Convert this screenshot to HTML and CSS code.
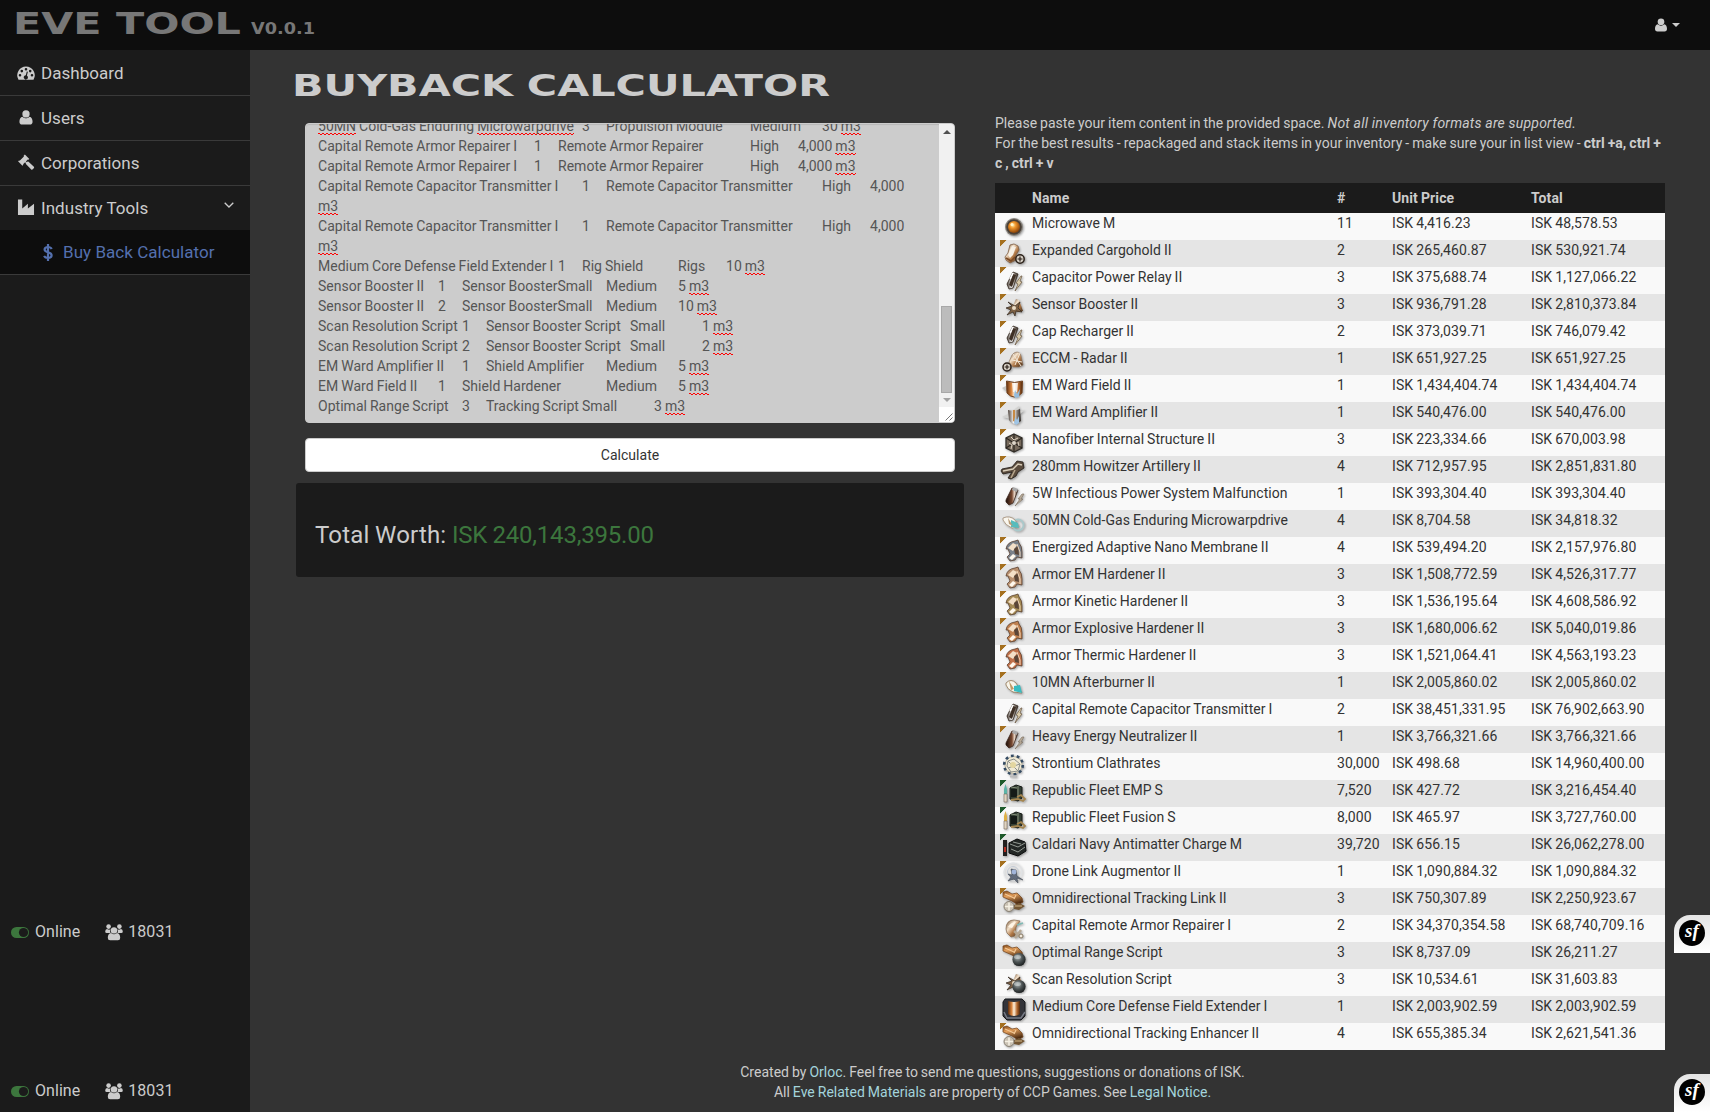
FILE: index.html
```html
<!DOCTYPE html>
<html lang="en">
<head>
<meta charset="utf-8">
<title>Eve Tool - Buyback Calculator</title>
<link rel="stylesheet" href="styles.css">
</head>
<body>
<svg class="defs" width="0" height="0" aria-hidden="true">
  <defs>
    <linearGradient id="bronze" x1="0" y1="0" x2="1" y2="1"><stop offset="0" stop-color="#6d4a2c"/><stop offset=".35" stop-color="#f3e2cc"/><stop offset=".6" stop-color="#b27a48"/><stop offset="1" stop-color="#3b2818"/></linearGradient>
    <linearGradient id="orange" x1="0" y1="0" x2=".4" y2="1"><stop offset="0" stop-color="#7c4517"/><stop offset=".4" stop-color="#e4a05c"/><stop offset="1" stop-color="#4b2a10"/></linearGradient>
    <linearGradient id="steel" x1="0" y1="0" x2="1" y2="0"><stop offset="0" stop-color="#4a3e36"/><stop offset=".45" stop-color="#fff"/><stop offset=".7" stop-color="#8b8178"/><stop offset="1" stop-color="#2c2622"/></linearGradient>
    <linearGradient id="copper" x1="0" y1="0" x2="1" y2="0"><stop offset="0" stop-color="#5d2f10"/><stop offset=".3" stop-color="#d8833d"/><stop offset=".5" stop-color="#fff2de"/><stop offset=".75" stop-color="#b4682d"/><stop offset="1" stop-color="#4d270d"/></linearGradient>
    <linearGradient id="darkred" x1="0" y1="0" x2="1" y2="0"><stop offset="0" stop-color="#1c0f09"/><stop offset=".5" stop-color="#7a4a32"/><stop offset=".7" stop-color="#e8d4c4"/><stop offset="1" stop-color="#24150e"/></linearGradient>
    <radialGradient id="amber" cx=".4" cy=".35" r=".7"><stop offset="0" stop-color="#fff0b0"/><stop offset=".35" stop-color="#f0952a"/><stop offset="1" stop-color="#7c3804"/></radialGradient>
    <radialGradient id="glass" cx=".4" cy=".35" r=".7"><stop offset="0" stop-color="#a9b0b0"/><stop offset=".5" stop-color="#4c5354"/><stop offset="1" stop-color="#171a1a"/></radialGradient>
  </defs>
  <symbol id="orb" viewBox="0 0 27 27"><circle cx="14" cy="14" r="9" fill="#8b8781"/><circle cx="14" cy="14" r="7.8" fill="#4a4037"/><circle cx="14" cy="14" r="6" fill="url(#amber)"/><circle cx="12" cy="11.5" r="1.5" fill="#fff5cc"/></symbol>
  <symbol id="plus" viewBox="0 0 27 27"><circle cx="20" cy="19" r="4.2" fill="#d5cec4" stroke="#2b2018" stroke-width="1.5"/><path d="M20 16.6v4.8M17.6 19h4.8" stroke="#2b2018" stroke-width="1.2"/></symbol>
  <symbol id="cargo" viewBox="0 0 27 27"><path d="M5 17l3-4 2-8 4-1 4 2 1 4-3 5 0 5-6 3-4-3z" fill="url(#bronze)" stroke="#7d5d42" stroke-width=".8"/><path d="M8 15l4-9 4 1-3 8-3 3z" fill="#f6f0e6"/><path d="M6 18l5 3 4-4" fill="none" stroke="#7b4a24" stroke-width="1.5"/><use href="#plus"/></symbol>
  <symbol id="cap" viewBox="0 0 27 27"><path d="M7 17l6-12 5 2-5 14-4 1z" fill="url(#steel)" stroke="#35291f" stroke-width=".8"/><path d="M13 7l3 1-4 12-3-2z" fill="#3f3025"/><path d="M10 12l3-6" stroke="#fff" stroke-width="1.5"/><path d="M21 9l-5 7 2 1-3 7 7-9-2-1 2-5z" fill="#dacbaa" stroke="#64523c" stroke-width=".7"/></symbol>
  <symbol id="sensor" viewBox="0 0 27 27"><path d="M16 5l3 1 4 11-6 1-4-6z" fill="url(#bronze)"/><path d="M8 8l4 4-6 2 5 2-4 5 6-3 2 4 1-5 6 1-4-4 2-6-5 4z" fill="#7d6145" stroke="#31251b" stroke-width=".7"/><circle cx="14" cy="14" r="2" fill="#e9dbc5"/></symbol>
  <symbol id="dish" viewBox="0 0 27 27"><path d="M12 7c3-4 8-4 9 1l2 9-4 2-6 0-4-5z" fill="url(#bronze)" stroke="#8d7159" stroke-width=".6"/><path d="M13 6l8 12M20 5l-5 12M12 12l10 2" stroke="#f4e8d8"/><circle cx="7" cy="19" r="4" fill="#d5cec4" stroke="#2b2018" stroke-width="1.5"/><path d="M7 16.7v4.6M4.700 19h4.600" stroke="#2b2018" stroke-width="1.2"/></symbol>
  <symbol id="ward" viewBox="0 0 27 27"><path d="M2 13l4-2v5z" fill="#c7c5c2"/><path d="M6.5 6q8 3 16 0l-.5 12q-8 8-15 0z" fill="url(#copper)" stroke="#71411e"/><path d="M12 8h6l-1 9h-4z" fill="#fff" opacity=".75"/><path d="M14 20l1-5 2 4 3-5-1 8-4 1z" fill="#95bcdc"/></symbol>
  <symbol id="amp" viewBox="0 0 27 27"><path d="M2 15l6-3 11-8 0 5 6-1-5 4-1 7z" fill="#d3d3d1"/><path d="M8 8q6 2 12-1l1 12q-7 6-12-1z" fill="url(#steel)"/><path d="M13 8h2v12l-2-1z" fill="#c88a43"/><path d="M14 21l1-6 2 3 2-4v7l-3 2z" fill="#9fc4e4"/></symbol>
  <symbol id="nano" viewBox="0 0 27 27"><path d="M14 5l8 4v10l-8 4-8-4V9z" fill="#776a5c" stroke="#34302b" stroke-width="1.3"/><path d="M14 5v18M6 9l16 10M22 9L6 19" stroke="#2a251f" stroke-width="1.2"/><path d="M11 8l3 3 4-2M9 14l3 2-1 4M18 13l1 4" stroke="#ddd2c2" fill="none"/><circle cx="14" cy="14" r="2" fill="#ded6c9"/></symbol>
  <symbol id="gun" viewBox="0 0 27 27"><path d="M1 15l1-2 10-2 5-6 6 1 1 6-6 4-2 4-5 3-3-1 4-6-9 2z" fill="#5b4c3e" stroke="#211b15" stroke-width=".8"/><path d="M3 15l10-2 5-5 4 1" fill="none" stroke="#d8cdb9" stroke-width="1.400"/><path d="M15 14l-4 8" stroke="#b7a68c" stroke-width="1.500"/></symbol>
  <symbol id="neut" viewBox="0 0 27 27"><path d="M6 17l6-12 6 2-5 13-4 2-3-3z" fill="url(#darkred)" stroke="#3b241a" stroke-width=".8"/><path d="M13 4l5 2-1 3-5-2z" fill="#aaa"/><path d="M22 11l-4 5h2l-5 7 8-7h-2l3-5z" fill="#b8ab98" stroke="#776a5b" stroke-width=".6"/></symbol>
  <symbol id="mwd" viewBox="0 0 27 27"><circle cx="18" cy="15" r="5.6" fill="none" stroke="#a9c9cb" stroke-width="1.8"/><path d="M3 8q7-3 12 2l4 7-7 1q-7-3-9-8z" fill="#faf7ef" stroke="#a18c74" stroke-width=".8"/><path d="M11 10l7 3 1 5-8-1z" fill="#57bcbd"/><path d="M8 8l5 8-4-2z" fill="#b89b77"/></symbol>
  <symbol id="burner" viewBox="0 0 27 27"><path d="M6 11q5-5 10 0l6 10-9-1q-6-3-7-7z" fill="#f9f5ea" stroke="#8f7554" stroke-width=".8"/><path d="M14 14l6-1 2 8-8-2z" fill="#38bcc1"/><path d="M9 9l5 8-3 1z" fill="#c09a68"/></symbol>
  <symbol id="helm" viewBox="0 0 27 27"><path d="M6 12q1-7 9-8l3-1 1 3q3 3 3 9v6l-5-1-2 3-5 1-3-4 3-3-2-5z" fill="currentColor" stroke="#523523" stroke-width=".7"/><path d="M8 11l5-5 4 2-4 6z" fill="#f3dfc7"/><path d="M14 12l4-3 1 9-4-1z" fill="#5b4638"/><path d="M17 7l3 8v5" fill="none" stroke="#f0d5b8"/><path d="M9 21l4-4 3 2-4 4z" fill="#fff8ed"/></symbol>
  <symbol id="stront" viewBox="0 0 27 27"><circle cx="13.5" cy="12" r="8.500" fill="#f0ead5" stroke="#c2bba5"/><circle cx="13.500" cy="12" r="9.300" fill="none" stroke="#344b63" stroke-width="2.600" stroke-dasharray="2.800 3.050"/><path d="M8 8l6-2 6 5-2 7-7 1-4-6zM8 8l10 10M20 11l-12 4" fill="none" stroke="#8b8f8b"/><circle cx="13" cy="12" r="3" fill="#e3d69f"/><path d="M10 23.500h7" stroke="#bbb" stroke-width="2"/></symbol>
  <symbol id="ammo" viewBox="0 0 27 27"><path d="M4 9l1.500-5L7 9v13H4z" fill="currentColor"/><path d="M4 14h3v8H4z" fill="#dfd3c1" stroke="#655644" stroke-width=".5"/><path d="M10 8l6-3 6 2v11l-4 3-8-2z" fill="#343f34" stroke="#151915"/><path d="M11 9h6v8h-6z" fill="#151a17"/><path d="M18 6v12M11 7l6 1" stroke="#87927c"/><path d="M11 20l7-1 5 2 2-2-4-4-4 2" fill="none" stroke="#a5854f" stroke-width="1.800"/></symbol>
  <symbol id="cald" viewBox="0 0 27 27"><path d="M3 6h4v16H3z" fill="#22201f"/><path d="M4 13h2v5H4z" fill="#b42c20"/><path d="M9 9l8-4 8 3 1 9-8 5-9-3z" fill="#232725" stroke="#0a0b0b"/><path d="M10 10l8 3 7-4M11 15l7 3 7-5M13 8l8 2" fill="none" stroke="#949a93"/></symbol>
  <symbol id="drone" viewBox="0 0 27 27"><circle cx="13" cy="11" r="9" fill="none" stroke="#dfe2e5"/><circle cx="13" cy="11" r="5.500" fill="none" stroke="#c3cad3"/><path d="M11 8l5 1 1 6 6 4-6-2 1 5-4-4-6 2 3-4-3-3 4 1z" fill="#626b7b" stroke="#38404b" stroke-width=".5"/><circle cx="14" cy="11" r="2.400" fill="#a2b5da"/></symbol>
  <symbol id="scope" viewBox="0 0 27 27"><path d="M3 4l4-1 5 3 5-1 5 5 1 4-5 3-6-4-9-4z" fill="url(#orange)" stroke="#714018" stroke-width=".7"/><path d="M5 6l9 4M16 7l-2 4" stroke="#f5c996" stroke-width="1.200"/><path d="M14 17l5-2 6 3-6 4-5-1z" fill="#735633"/><path d="M15 18l7 0" stroke="#d2b68a"/></symbol>
  <symbol id="track" viewBox="0 0 27 27"><use href="#scope"/><circle cx="9" cy="18.500" r="5" fill="#c8c0b2" stroke="#8b8376"/><path d="M9 14.500v8M5 18.500h8" stroke="#f5f0e3" stroke-width="1.500"/></symbol>
  <symbol id="repair" viewBox="0 0 27 27"><path d="M6 14q0-9 8-9l6 1-4 6-1 9-4 1-4-4z" fill="url(#bronze)" stroke="#83664b" stroke-width=".7"/><path d="M8 12q3-5 8-5l-4 6z" fill="#fff5e5"/><path d="M17 10l6-2" stroke="#7fb9b4" stroke-width="1.500"/><path d="M14 16l7 6M21 15l-6 8" stroke="#b5a895" stroke-width="2.500"/><circle cx="21" cy="21" r="2" fill="#f1e9dc" stroke="#877862"/></symbol>
  <symbol id="ball" viewBox="0 0 27 27"><circle cx="19" cy="17.500" r="6.600" fill="url(#glass)"/><ellipse cx="17.500" cy="15" rx="3.500" ry="2" fill="#dce2e2" opacity=".5"/></symbol>
  <symbol id="optimal" viewBox="0 0 27 27"><use href="#scope"/><use href="#ball"/></symbol>
  <symbol id="scan" viewBox="0 0 27 27"><use href="#sensor"/><use href="#ball"/></symbol>
  <symbol id="core" viewBox="0 0 27 27"><path d="M5 3h17l3 3v14l-4 4H7l-4-4V6z" fill="#33343a" stroke="#17181c"/><path d="M4 16l3 6h14l4-6" fill="none" stroke="#777b86" stroke-width="1.500"/><path d="M8 5q6 2 12 0v13q-6 4-12 0z" fill="url(#copper)"/></symbol>

  <symbol id="user" viewBox="0 0 14 16"><circle cx="7" cy="4.200" r="3.900"/><path d="M3.300 7.200C5 9.300 9 9.300 10.700 7.200 13 7.700 14 9.800 14 12.500 14 14.500 13 15.500 11.200 15.500H2.800C1 15.500 0 14.500 0 12.500 0 9.800 1 7.700 3.300 7.200z"/></symbol>
  <symbol id="gauge" viewBox="0 0 18 14"><path fill-rule="evenodd" d="M9 .5a8.800 8.800 0 0 1 7.500 13.300H1.500A8.800 8.800 0 0 1 9 .5zM3 8a1.300 1.300 0 1 0 0 2.600A1.300 1.300 0 0 0 3 8zm1.800-4.200a1.300 1.300 0 1 0 0 2.600 1.300 1.300 0 0 0 0-2.600zM9 2a1.300 1.300 0 1 0 0 2.600A1.300 1.300 0 0 0 9 2zm4.200 1.800a1.300 1.300 0 1 0 0 2.600 1.300 1.300 0 0 0 0-2.600zM15 8a1.300 1.300 0 1 0 0 2.600A1.300 1.300 0 0 0 15 8zM9.800 5.400l-1 3.900a2.100 2.100 0 1 0 1.100.3l1-3.900z"/></symbol>
  <symbol id="gavel" viewBox="0 0 18 18"><path d="M7.800.5l4.700 4.700-1 1-.6-.3-2 2 1 .9 1.200-1.200 6 5.700c.7.700.7 1.300.1 1.900l-1 1c-.7.600-1.300.6-1.900-.1L8.600 10.200 9 9.700l-.9-.9-2.200 2 .3.700-1 1L.6 7.800l1-1 .7.300 4.500-4.500-.3-.8z"/></symbol>
  <symbol id="factory" viewBox="0 0 18 18"><path d="M.5.500H5v9.500l6-5v5l6.500-5V17H.5z"/></symbol>
  <symbol id="group" viewBox="0 0 18 17"><circle cx="3.600" cy="2.600" r="2.300"/><circle cx="14.400" cy="2.600" r="2.300"/><path d="M2 5q2 1.300 3.700.3Q4.500 7 5.500 9H1.700Q.2 9 .2 7.400.3 5.500 2 5zM16 5q-2 1.300-3.700.3Q13.500 7 12.500 9h3.800q1.500 0 1.500-1.600-.1-1.900-1.800-2.400z"/><circle cx="9" cy="6.400" r="3.200"/><path d="M6 9q3 2.500 6 0 3.200.5 3.200 4.800 0 2.500-2.300 2.500H5.100q-2.300 0-2.300-2.500Q2.800 9.500 6 9z"/></symbol>
</svg>

<header class="topbar">
  <a class="brand">
    <svg width="225" height="30"><text x="-2" y="24" textLength="228" lengthAdjust="spacingAndGlyphs">EVE TOOL</text></svg>
    <svg width="64" height="30" class="version"><text x="0" y="24" textLength="64" lengthAdjust="spacingAndGlyphs">V0.0.1</text></svg>
  </a>
  <div class="account"><svg width="12" height="14"><use href="#user"/></svg><i class="caret"></i></div>
</header>

<div class="page">
  <aside class="sidebar">
    <nav>
      <a class="item"><svg width="18" height="14"><use href="#gauge"/></svg>Dashboard</a>
      <a class="item"><svg width="18" height="15"><use href="#user"/></svg>Users</a>
      <a class="item"><svg width="18" height="17"><use href="#gavel"/></svg>Corporations</a>
      <a class="item open"><svg width="18" height="17"><use href="#factory"/></svg>Industry Tools<svg class="chevron" width="10" height="6" viewBox="0 0 10 6"><path d="M.7.700L5 5 9.300.700"/></svg></a>
      <a class="sub"><svg width="10" height="17" viewBox="0 0 10 17"><path d="M5 0v17M8.700 5C8 3.500 6.600 3 5 3 3 3 1.600 4 1.600 5.600 1.600 9.200 8.600 7.500 8.600 11.300 8.600 13 7 14 5 14 3.300 14 1.800 13.400 1 12"/></svg>Buy Back Calculator</a>
    </nav>
    <div class="status first"><svg width="18" height="11"><rect width="18" height="11" rx="5.500"/><circle cx="12.500" cy="5.500" r="4.600"/></svg><span class="online">Online</span><svg class="people" width="18" height="17"><use href="#group"/></svg><span>18031</span></div>
    <div class="status"><svg width="18" height="11"><rect width="18" height="11" rx="5.500"/><circle cx="12.500" cy="5.500" r="4.600"/></svg><span class="online">Online</span><svg class="people" width="18" height="17"><use href="#group"/></svg><span>18031</span></div>
  </aside>

  <main>
    <div class="columns">
      <section class="left">
        <h1><svg width="538" height="30"><text x="-3" y="24" textLength="538" lengthAdjust="spacingAndGlyphs">BUYBACK CALCULATOR</text></svg></h1>
        <div class="paste">
          <div class="lines"><div><u>50MN</u> Cold-Gas Enduring <u>Microwarpdrive</u>	3	Propulsion Module		Medium	30 <u>m3</u></div><div>Capital Remote Armor Repairer I	1	Remote Armor Repairer		High	4,000 <u>m3</u></div><div>Capital Remote Armor Repairer I	1	Remote Armor Repairer		High	4,000 <u>m3</u></div><div>Capital Remote Capacitor Transmitter I	1	Remote Capacitor Transmitter		High	4,000
<u>m3</u></div><div>Capital Remote Capacitor Transmitter I	1	Remote Capacitor Transmitter		High	4,000
<u>m3</u></div><div>Medium Core Defense Field Extender I	1	Rig Shield		Rigs	10 <u>m3</u></div><div>Sensor Booster II	1	Sensor BoosterSmall	Medium	5 <u>m3</u></div><div>Sensor Booster II	2	Sensor BoosterSmall	Medium	10 <u>m3</u></div><div>Scan Resolution Script	1	Sensor Booster Script	Small		1 <u>m3</u></div><div>Scan Resolution Script	2	Sensor Booster Script	Small		2 <u>m3</u></div><div>EM Ward Amplifier II	1	Shield Amplifier	Medium	5 <u>m3</u></div><div>EM Ward Field II	1	Shield Hardener		Medium	5 <u>m3</u></div><div>Optimal Range Script	3	Tracking Script	Small		3 <u>m3</u></div></div>
          <div class="scroll"><i class="up"></i><i class="thumb"></i><i class="down"></i><svg class="grip" width="15" height="15"><path d="M6.500 13.500l7-7M10.500 13.500l3-3"/></svg></div>
        </div>
        <button class="calc">Calculate</button>
        <div class="well">Total Worth: <span>ISK 240,143,395.00</span></div>
      </section>

      <section class="right">
        <p>Please paste your item content in the provided space. <em>Not all inventory formats are supported.</em><br>For the best results - repackaged and stack items in your inventory - make sure your in list view - <b>ctrl +a, ctrl +<br>c , ctrl + v</b></p>
        <table>
          <colgroup><col class="c-icon"><col class="c-name"><col class="c-num"><col class="c-price"><col class="c-price"></colgroup>
          <thead><tr><th></th><th>Name</th><th>#</th><th>Unit Price</th><th>Total</th></tr></thead>
          <tbody>
          <tr><td><svg><use href="#orb"/></svg></td><td>Microwave M</td><td>11</td><td>ISK 4,416.23</td><td>ISK 48,578.53</td></tr>
          <tr class="t2"><td><svg><use href="#cargo"/></svg></td><td>Expanded Cargohold II</td><td>2</td><td>ISK 265,460.87</td><td>ISK 530,921.74</td></tr>
          <tr class="t2"><td><svg><use href="#cap"/></svg></td><td>Capacitor Power Relay II</td><td>3</td><td>ISK 375,688.74</td><td>ISK 1,127,066.22</td></tr>
          <tr class="t2"><td><svg><use href="#sensor"/></svg></td><td>Sensor Booster II</td><td>3</td><td>ISK 936,791.28</td><td>ISK 2,810,373.84</td></tr>
          <tr class="t2"><td><svg><use href="#cap"/></svg></td><td>Cap Recharger II</td><td>2</td><td>ISK 373,039.71</td><td>ISK 746,079.42</td></tr>
          <tr class="t2"><td><svg><use href="#dish"/></svg></td><td>ECCM - Radar II</td><td>1</td><td>ISK 651,927.25</td><td>ISK 651,927.25</td></tr>
          <tr class="t2"><td><svg><use href="#ward"/></svg></td><td>EM Ward Field II</td><td>1</td><td>ISK 1,434,404.74</td><td>ISK 1,434,404.74</td></tr>
          <tr class="t2"><td><svg><use href="#amp"/></svg></td><td>EM Ward Amplifier II</td><td>1</td><td>ISK 540,476.00</td><td>ISK 540,476.00</td></tr>
          <tr class="t2"><td><svg><use href="#nano"/></svg></td><td>Nanofiber Internal Structure II</td><td>3</td><td>ISK 223,334.66</td><td>ISK 670,003.98</td></tr>
          <tr class="t2"><td><svg><use href="#gun"/></svg></td><td>280mm Howitzer Artillery II</td><td>4</td><td>ISK 712,957.95</td><td>ISK 2,851,831.80</td></tr>
          <tr><td><svg><use href="#neut"/></svg></td><td>5W Infectious Power System Malfunction</td><td>1</td><td>ISK 393,304.40</td><td>ISK 393,304.40</td></tr>
          <tr><td><svg><use href="#mwd"/></svg></td><td>50MN Cold-Gas Enduring Microwarpdrive</td><td>4</td><td>ISK 8,704.58</td><td>ISK 34,818.32</td></tr>
          <tr class="t2"><td><svg class="h-steel"><use href="#helm"/></svg></td><td>Energized Adaptive Nano Membrane II</td><td>4</td><td>ISK 539,494.20</td><td>ISK 2,157,976.80</td></tr>
          <tr class="t2"><td><svg class="h-em"><use href="#helm"/></svg></td><td>Armor EM Hardener II</td><td>3</td><td>ISK 1,508,772.59</td><td>ISK 4,526,317.77</td></tr>
          <tr class="t2"><td><svg class="h-kin"><use href="#helm"/></svg></td><td>Armor Kinetic Hardener II</td><td>3</td><td>ISK 1,536,195.64</td><td>ISK 4,608,586.92</td></tr>
          <tr class="t2"><td><svg class="h-exp"><use href="#helm"/></svg></td><td>Armor Explosive Hardener II</td><td>3</td><td>ISK 1,680,006.62</td><td>ISK 5,040,019.86</td></tr>
          <tr class="t2"><td><svg class="h-therm"><use href="#helm"/></svg></td><td>Armor Thermic Hardener II</td><td>3</td><td>ISK 1,521,064.41</td><td>ISK 4,563,193.23</td></tr>
          <tr class="t2"><td><svg><use href="#burner"/></svg></td><td>10MN Afterburner II</td><td>1</td><td>ISK 2,005,860.02</td><td>ISK 2,005,860.02</td></tr>
          <tr><td><svg><use href="#cap"/></svg></td><td>Capital Remote Capacitor Transmitter I</td><td>2</td><td>ISK 38,451,331.95</td><td>ISK 76,902,663.90</td></tr>
          <tr class="t2"><td><svg><use href="#neut"/></svg></td><td>Heavy Energy Neutralizer II</td><td>1</td><td>ISK 3,766,321.66</td><td>ISK 3,766,321.66</td></tr>
          <tr><td><svg><use href="#stront"/></svg></td><td>Strontium Clathrates</td><td>30,000</td><td>ISK 498.68</td><td>ISK 14,960,400.00</td></tr>
          <tr class="faction"><td><svg class="a-emp"><use href="#ammo"/></svg></td><td>Republic Fleet EMP S</td><td>7,520</td><td>ISK 427.72</td><td>ISK 3,216,454.40</td></tr>
          <tr class="faction"><td><svg class="a-fus"><use href="#ammo"/></svg></td><td>Republic Fleet Fusion S</td><td>8,000</td><td>ISK 465.97</td><td>ISK 3,727,760.00</td></tr>
          <tr class="faction"><td><svg><use href="#cald"/></svg></td><td>Caldari Navy Antimatter Charge M</td><td>39,720</td><td>ISK 656.15</td><td>ISK 26,062,278.00</td></tr>
          <tr class="t2"><td><svg><use href="#drone"/></svg></td><td>Drone Link Augmentor II</td><td>1</td><td>ISK 1,090,884.32</td><td>ISK 1,090,884.32</td></tr>
          <tr class="t2"><td><svg><use href="#track"/></svg></td><td>Omnidirectional Tracking Link II</td><td>3</td><td>ISK 750,307.89</td><td>ISK 2,250,923.67</td></tr>
          <tr><td><svg><use href="#repair"/></svg></td><td>Capital Remote Armor Repairer I</td><td>2</td><td>ISK 34,370,354.58</td><td>ISK 68,740,709.16</td></tr>
          <tr><td><svg><use href="#optimal"/></svg></td><td>Optimal Range Script</td><td>3</td><td>ISK 8,737.09</td><td>ISK 26,211.27</td></tr>
          <tr><td><svg><use href="#scan"/></svg></td><td>Scan Resolution Script</td><td>3</td><td>ISK 10,534.61</td><td>ISK 31,603.83</td></tr>
          <tr><td><svg><use href="#core"/></svg></td><td>Medium Core Defense Field Extender I</td><td>1</td><td>ISK 2,003,902.59</td><td>ISK 2,003,902.59</td></tr>
          <tr class="t2"><td><svg><use href="#track"/></svg></td><td>Omnidirectional Tracking Enhancer II</td><td>4</td><td>ISK 655,385.34</td><td>ISK 2,621,541.36</td></tr>
          </tbody>
        </table>
      </section>
    </div>
    <footer>Created by <a>Orloc</a>. Feel free to send me questions, suggestions or donations of ISK.<br>All <a>Eve Related Materials</a> are property of CCP Games. See <a>Legal Notice.</a></footer>
  </main>
</div>
<div class="sf upper"><span>sf</span></div>
<div class="sf lower"><span>sf</span></div>
</body>
</html>
```
FILE: styles.css
```css
* { box-sizing: border-box; }
html, body { height: 100%; }
body {
  margin: 0;
  display: flex;
  flex-direction: column;
  overflow: hidden;
  background: #333;
  color: #ccc;
  font: 14px/20px Roboto, "Liberation Sans", sans-serif;
  word-spacing: -0.5px;
  letter-spacing: 0.025px;
}
svg { display: block; flex: none; fill: currentColor; overflow: visible; }
.defs { position: absolute; }

.topbar {
  flex: none;
  height: 50px;
  padding: 0 30px 0 15px;
  display: flex;
  justify-content: space-between;
  align-items: center;
  background: #0d0d0d;
}
.brand {
  display: flex;
  gap: 11px;
  height: 30px;
  color: #777;
  letter-spacing: 0;
  word-spacing: 0;
}
.brand text, h1 text { font-family: "DejaVu Sans", sans-serif; font-weight: bold; font-size: 30px; }
.brand .version text { font-size: 15.500px; }
.account { display: flex; align-items: center; gap: 5px; }
.caret { border: 4px solid transparent; border-top-color: #ccc; border-bottom: 0; }

.page { flex: 1; min-height: 0; display: flex; }
.sidebar {
  flex: none;
  width: 250px;
  background: #1b1b1b;
  font-size: 17px;
  letter-spacing: 0.04px;
  display: flex;
  flex-direction: column;
  word-spacing: 0;
}
.item {
  height: 46px;
  margin-bottom: -1px;
  padding: 0 16px 0 17px;
  display: flex;
  align-items: center;
  gap: 6px;
  border-bottom: 1px solid #3a3a3a;
}
.item.open { height: 45px; margin: 0; border: 0; }
.chevron { margin: -5px 0 0 auto; fill: none; stroke: #ccc; stroke-width: 1.300; }
.sub {
  height: 45px;
  padding-left: 43px;
  display: flex;
  align-items: center;
  gap: 10px;
  background: #0d0d0d;
  border-bottom: 1px solid #3a3a3a;
  color: #5470ae;
}
.sub svg { fill: none; stroke: #5470ae; stroke-width: 2.200; }
.status { display: flex; align-items: center; height: 20px; margin-bottom: 11px; padding-left: 11px; font-size: 16px; letter-spacing: 0.05px; }
.status.first { margin: auto 0 139px; }
.status rect { fill: #3c763d; }
.status circle { fill: #1b1b1b; }
.online { margin: 0 25px 0 6px; }
.people { margin-right: 5px; }

main { flex: 1; padding: 0 45px; }
.columns { display: flex; gap: 31px; height: 1000px; }
.left { width: 669px; }
h1 { margin: 22px 0 21px; height: 30px; }
.paste {
  display: flex;
  width: 650px;
  height: 300px;
  margin: 0 0 15px 10px;
  overflow: hidden;
  border: 1px solid #ccc;
  border-radius: 4px;
  background: #ccc;
  box-shadow: inset 0 1px 1px rgba(0, 0, 0, .1);
  color: #555;
}
.lines { flex: 1; margin-top: -8px; padding-left: 12px; white-space: pre; tab-size: 24px; }
/* two-pixel zigzag marking misspelt words */
.lines u {
  padding-bottom: 1px;
  text-decoration: none;
  background-image: linear-gradient(90deg, #f00 2px, transparent 2px), linear-gradient(90deg, transparent 2px, #f00 2px);
  background-size: 4px 1px;
  background-position: 0 calc(100% - 1px), 0 100%;
  background-repeat: repeat-x;
}
.scroll { width: 15px; background: #f1f1f1; display: flex; flex-direction: column; align-items: center; }
.up { margin-top: 6px; border: 4px solid transparent; border-bottom-color: #505050; border-top: 0; }
.thumb { width: 11px; height: 87px; margin-top: auto; background: #bcbcbc; border: 1px solid #a8a8a8; }
.down { margin: 5px 0 5px; border: 4px solid transparent; border-top-color: #a3a3a3; border-bottom: 0; }
.grip { background: #fff; fill: none; stroke: #777; }
.calc {
  display: block;
  width: 650px;
  height: 34px;
  margin: 0 0 11px 10px;
  border: 1px solid #ccc;
  border-radius: 4px;
  background: #fff;
  color: #333;
  font: inherit;
  letter-spacing: inherit;
}
.well {
  width: 668px;
  height: 94px;
  margin-left: 1px;
  padding: 39px 19px 0;
  border-radius: 3px;
  background: #1b1b1b;
  font-size: 24px;
  line-height: 26px;
  letter-spacing: 0.17px;
}
.well span { color: #3c763d; letter-spacing: -0.2px; }

.right { width: 670px; padding-top: 63px; }
.right p { margin: 0 0 10px; white-space: nowrap; }
.right em { letter-spacing: 0.2px; word-spacing: 0; }
table { width: 670px; table-layout: fixed; border-collapse: collapse; color: #333; }
.c-icon { width: 32px; }
.c-name { width: 305px; }
.c-num { width: 55px; }
.c-price { width: 139px; }
th { height: 30px; padding: 5px; text-align: left; background: #1b1b1b; color: #ccc; line-height: 20px; letter-spacing: 0.1px; }
td { height: 27px; padding: 0 0 0 5px; vertical-align: top; background: #f9f9f9; }
td:nth-child(n + 3) { letter-spacing: 0.1px; }
tr:nth-child(even) td { background: #e5e5e5; }
td svg { width: 27px; height: 27px; filter: drop-shadow(1px 1px 1px rgba(0, 0, 0, .35)); }
tr.t2 td:first-child, tr.faction td:first-child {
  background-image: linear-gradient(135deg, #a5701f 4.500px, transparent 5px);
  background-position: 5px 0;
  background-repeat: no-repeat;
}
tr.faction td:first-child { background-image: linear-gradient(135deg, #1e5a2b 4.500px, transparent 5px); }
.h-steel { color: #7a818a; }
.h-em { color: #b78f6f; }
.h-kin { color: #a58b55; }
.h-exp { color: #c0804f; }
.h-therm { color: #c0704a; }
.a-emp { color: #5cb5a8; }
.a-fus { color: #dfb045; }

footer { padding: 12px 0 0 25px; text-align: center; letter-spacing: 0.01px; }
footer a { color: #a3d4dc; }

.sf {
  position: absolute;
  right: 0;
  width: 36px;
  height: 38px;
  padding: 5px;
  border-top-left-radius: 16px;
  background: linear-gradient(#e4e4e4, #fff);
}
.sf.upper { top: 915px; }
.sf.lower { top: 1074px; }
.sf span {
  display: block;
  width: 26px;
  height: 26px;
  border-radius: 50%;
  background: #000;
  color: #fff;
  text-align: center;
  font: italic bold 19px/22px "Liberation Serif", serif;
}
```
